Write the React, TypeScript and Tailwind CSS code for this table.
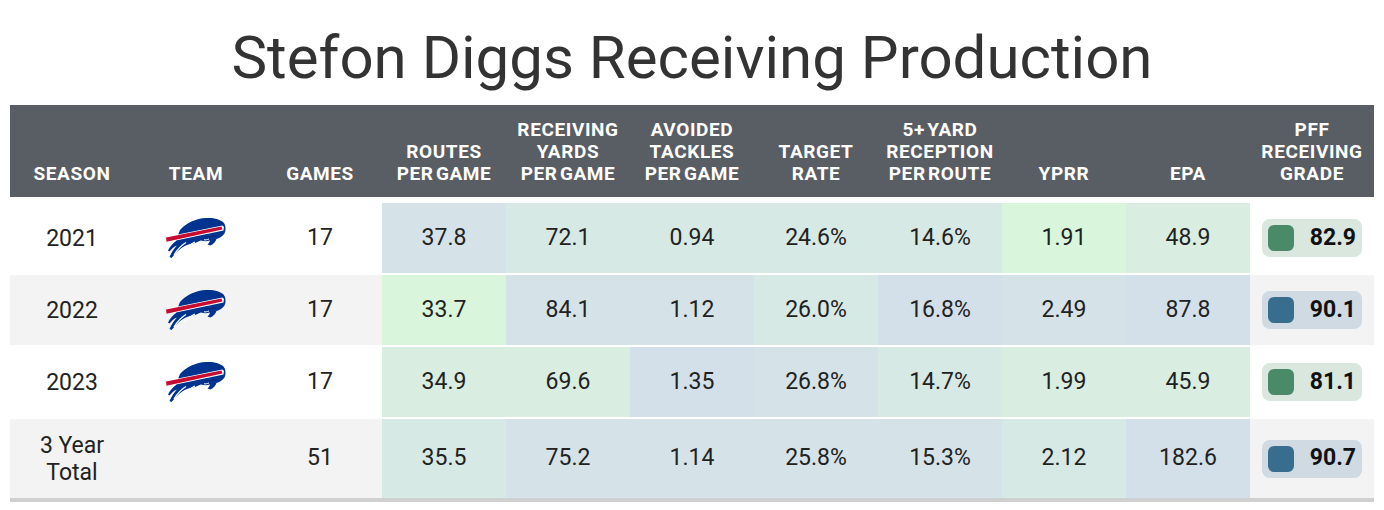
import React from "react";

const HEADERS = [
  ["SEASON"],
  ["TEAM"],
  ["GAMES"],
  ["ROUTES", "PER GAME"],
  ["RECEIVING", "YARDS", "PER GAME"],
  ["AVOIDED", "TACKLES", "PER GAME"],
  ["TARGET", "RATE"],
  ["5+ YARD", "RECEPTION", "PER ROUTE"],
  ["YPRR"],
  ["EPA"],
  ["PFF", "RECEIVING", "GRADE"],
];

// heat colours, bluest -> greenest
const A = "bg-[#d3e0ea]";
const B = "bg-[#d5e3e8]";
const C = "bg-[#d7e9e4]";
const D = "bg-[#d9ede1]";
const E = "bg-[#d9f6dc]";

type Row = {
  season: string[];
  logo: boolean;
  games: string;
  cells: [string, string][];
  grade: string;
  tone: "green" | "blue";
  striped: boolean;
  tall?: boolean;
};

const ROWS: Row[] = [
  {
    season: ["2021"],
    logo: true,
    games: "17",
    cells: [["37.8", B], ["72.1", C], ["0.94", C], ["24.6%", C], ["14.6%", C], ["1.91", E], ["48.9", D]],
    grade: "82.9",
    tone: "green",
    striped: false,
  },
  {
    season: ["2022"],
    logo: true,
    games: "17",
    cells: [["33.7", E], ["84.1", B], ["1.12", B], ["26.0%", C], ["16.8%", A], ["2.49", B], ["87.8", A]],
    grade: "90.1",
    tone: "blue",
    striped: true,
  },
  {
    season: ["2023"],
    logo: true,
    games: "17",
    cells: [["34.9", D], ["69.6", D], ["1.35", A], ["26.8%", B], ["14.7%", C], ["1.99", D], ["45.9", D]],
    grade: "81.1",
    tone: "green",
    striped: false,
  },
  {
    season: ["3 Year", "Total"],
    logo: false,
    games: "51",
    cells: [["35.5", C], ["75.2", B], ["1.14", B], ["25.8%", B], ["15.3%", B], ["2.12", C], ["182.6", A]],
    grade: "90.7",
    tone: "blue",
    striped: true,
    tall: true,
  },
];

const BillsLogo = () => (
  <svg width="62" height="42" viewBox="0 0 62 42">
    {/* body */}
    <path
      d="M15 13 C21 6 31 1.5 41 1 C49 0.5 55.5 2.5 58.5 5.5 C61 8.5 61 13.5 59.5 16.5 C57.5 19.5 54.5 21 51.5 22 C50.5 25 48.5 27 45.5 28.5 L42.5 27.5 C44 26 44.8 25 45 23.5 C42 24.5 39 24.5 36 23.5 C33 24.5 31 26 28 26.5 C24 27 20 28.5 16.5 31 C12.5 34 9.5 37.5 6.5 41 L4.5 40 C6.5 35.5 9 31.5 12 28.5 C9 29.5 7 31.5 4.5 34.5 L3 33.5 C5 29.5 8 26 11 24 L13 18 Z"
      fill="#00338d"
    />
    {/* leg separations */}
    <path d="M21 25.5 C16 28.5 12 33 9 38" stroke="#ffffff" strokeWidth="1.3" fill="none" />
    <path d="M30 25 C26 27 22 30 19.5 33.5" stroke="#ffffff" strokeWidth="1.2" fill="none" />
    <path d="M44 22 C42 22.8 40.5 23 39 22.8" stroke="#ffffff" strokeWidth="1" fill="none" />
    {/* stripe */}
    <path d="M0.5 20 L57.5 8.5 L59 10 L58.5 13.5 L1.5 25.5 Z" fill="#ffffff" />
    <path d="M1 20.5 L56.5 9.5 L57.3 12.5 L1.5 24.8 Z" fill="#c60c30" />
  </svg>
);

const Badge = ({ value, tone }: { value: string; tone: "green" | "blue" }) => (
  <div
    className={`flex items-center justify-between w-[100px] h-[38px] rounded-lg pl-[6px] pr-[6px] ${
      tone === "green" ? "bg-[#d9e7df]" : "bg-[#cfdae2]"
    }`}
  >
    <div className={`w-[26px] h-[26px] rounded-md ${tone === "green" ? "bg-[#4a8a68]" : "bg-[#386d8e]"}`} />
    <span className="text-[23px] font-bold text-[#111]">{value}</span>
  </div>
);

export default function App() {
  return (
    <div className="w-[1384px] h-[510px] bg-white font-['Roboto',sans-serif] text-[#222]">
      <h1 className="pt-[22px] mb-[11px] h-[94px] text-center text-[60px] leading-[72px] text-[#333]">
        Stefon Diggs Receiving Production
      </h1>

      <div className="mx-[10px] w-[1364px]">
        {/* header */}
        <div className="grid grid-cols-11 h-[92px] bg-[#595d64] text-white">
          {HEADERS.map((lines, i) => (
            <div
              key={i}
              className="flex flex-col items-center justify-end pb-[12px] text-[19px] font-bold leading-[22px] tracking-[0.6px] [word-spacing:-3px] text-center"
            >
              {lines.map((l) => (
                <span key={l}>{l}</span>
              ))}
            </div>
          ))}
        </div>

        {/* body */}
        <div className="flex flex-col gap-[2px] pt-[6px] text-[23px]">
          {ROWS.map((r) => {
            const bg = r.striped ? "bg-[#f3f3f3]" : "bg-white";
            return (
              <div key={r.season.join(" ")} className={`grid grid-cols-11 ${r.tall ? "h-[79px]" : "h-[70px]"}`}>
                <div className={`flex flex-col items-center justify-center leading-[27px] ${bg}`}>
                  {r.season.map((s) => (
                    <span key={s}>{s}</span>
                  ))}
                </div>
                <div className={`flex items-center justify-center ${bg}`}>{r.logo && <BillsLogo />}</div>
                <div className={`flex items-center justify-center ${bg}`}>{r.games}</div>
                {r.cells.map(([v, c], i) => (
                  <div key={i} className={`flex items-center justify-center ${c}`}>
                    {v}
                  </div>
                ))}
                <div className={`flex items-center justify-center ${bg}`}>
                  <Badge value={r.grade} tone={r.tone} />
                </div>
              </div>
            );
          })}
        </div>
        <div className="h-[4px] bg-[#d0d0d0]" />
      </div>
    </div>
  );
}
